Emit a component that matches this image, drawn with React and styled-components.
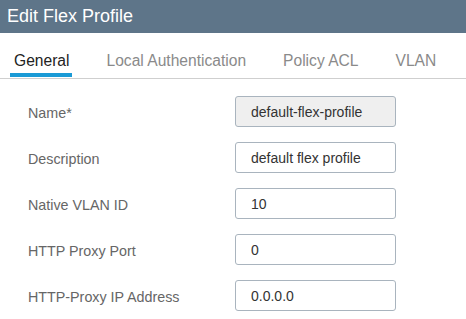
import styled, { createGlobalStyle } from 'styled-components';

const Global = createGlobalStyle`
    body {
        margin: 0;
        background: #fff;
        font-family: "Liberation Sans", Arial, sans-serif;
    }
`;

const tabs = ['General', 'Local Authentication', 'Policy ACL', 'VLAN'];

const fields = [
    { label: 'Name*', value: 'default-flex-profile', disabled: true },
    { label: 'Description', value: 'default flex profile' },
    { label: 'Native VLAN ID', value: '10' },
    { label: 'HTTP Proxy Port', value: '0' },
    { label: 'HTTP-Proxy IP Address', value: '0.0.0.0' },
];

function App() {
    return (
        <Panel>
            <Global />
            <Header>Edit Flex Profile</Header>
            <Tabs>
                {tabs.map((t, i) => (
                    <Tab key={t} $active={i === 0}>
                        {t}
                    </Tab>
                ))}
            </Tabs>
            <Form>
                {fields.map((f) => (
                    <Row key={f.label}>
                        <Label>{f.label}</Label>
                        <Input readOnly defaultValue={f.value} $disabled={f.disabled} />
                    </Row>
                ))}
            </Form>
        </Panel>
    );
}

export default App;

const Panel = styled.div`
    width: 466px;
    height: 319px;
    overflow: hidden;
    background: #fff;
`;

const Header = styled.div`
    height: 33px;
    background-color: #5e7589;
    color: #fff;
    font-size: 18px;
    line-height: 32px;
    padding-left: 7px;
`;

const Tabs = styled.div`
    display: flex;
    gap: 30px;
    margin-top: 12px;
    padding-left: 10px;
    border-bottom: 1px solid #cfcfcf;
    height: 33px;
`;

const Tab = styled.div`
    font-size: 15.6px;
    color: ${(p) => (p.$active ? '#222' : '#8a8a8a')};
    padding: 7px 3px 0 4px;
    height: 21px;
    border-bottom: 4px solid ${(p) => (p.$active ? '#1a9ad6' : 'transparent')};
    white-space: nowrap;
`;

const Form = styled.div`
    display: flex;
    flex-direction: column;
    gap: 15px;
    padding: 17px 0 0 28px;
`;

const Row = styled.div`
    display: flex;
    align-items: center;
    height: 31px;
`;

const Label = styled.div`
    width: 207px;
    font-size: 14.3px;
    color: #666;
    padding-top: 3px;
    white-space: nowrap;
`;

const Input = styled.input`
    box-sizing: border-box;
    width: 161px;
    height: 31px;
    border: 1px solid #a9b4be;
    border-radius: 3px;
    padding: 0 0 0 15px;
    font-family: "Liberation Sans", Arial, sans-serif;
    font-size: 14px;
    color: #333;
    background: ${(p) => (p.$disabled ? '#efefef' : '#fff')};
    outline: none;
`;
